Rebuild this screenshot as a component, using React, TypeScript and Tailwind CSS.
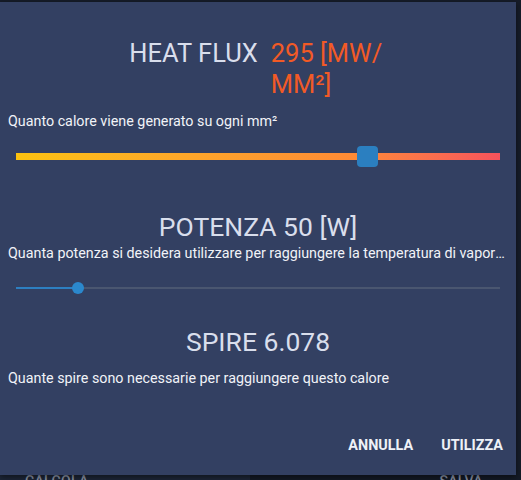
import React from "react";

export default function App() {
  return (
    <div
      className="relative w-[521px] h-[480px] overflow-hidden bg-[#161c29]"
      style={{ fontFamily: "Roboto, 'Noto Sans', sans-serif" }}
    >
      {/* background content */}
      <div className="absolute left-0 bottom-0 w-full h-[10px] flex">
        <div className="w-[250px] h-full bg-[#1d2637] flex items-start pl-[25px] pt-[4px]">
          <span className="text-[14px] font-medium text-[#8a93a6] tracking-wide leading-none">CALCOLA</span>
        </div>
        <div className="flex-1 h-full bg-[#141a26] flex items-start justify-end pr-[38px] pt-[4px]">
          <span className="text-[14px] font-medium text-[#8a93a6] tracking-wide leading-none">SALVA</span>
        </div>
      </div>

      {/* dialog */}
      <div className="absolute left-0 top-[2px] w-[516px] h-[473px] bg-[#334062] shadow-[0_2px_6px_rgba(0,0,0,0.5)] flex flex-col">
        <div className="flex justify-center mt-[36px] text-[25.5px] leading-[31px]">
          <span className="text-[#d9deec]">HEAT FLUX</span>
          <span className="ml-[13px] w-[116px] text-[#f25a26]">295 [MW/ MM²]</span>
        </div>
        <div className="mt-[12px] px-[8px] text-[14.3px] leading-[18px] text-[#f1f3f8]">
          Quanto calore viene generato su ogni mm²
        </div>
        <div className="relative mx-[16px] mt-[16px] h-[21px] flex items-center">
          <div className="w-full h-[7px] bg-gradient-to-r from-[#fcc20f] via-[#fe8a35] via-70% to-[#f7525b]" />
          <div className="absolute left-[341px] top-0 w-[21px] h-[21px] rounded-[4px] bg-[#2b7fc0]" />
        </div>

        <div className="mt-[44px] text-center text-[26.5px] leading-[31px] text-[#d9deec]">
          POTENZA 50 [W]
        </div>
        <div className="mt-[2px] px-[8px] text-[14.3px] leading-[18px] text-[#f1f3f8] whitespace-nowrap overflow-hidden text-ellipsis">
          Quanta potenza si desidera utilizzare per raggiungere la temperatura di vaporizzazione del liquido
        </div>
        <div className="relative mx-[16px] mt-[20px] h-[12px] flex items-center">
          <div className="w-full h-[2px] bg-[#4a5670]" />
          <div className="absolute left-0 top-[5px] w-[62px] h-[2px] bg-[#2d7fc1]" />
          <div className="absolute left-[56px] top-0 w-[12px] h-[12px] rounded-full bg-[#2b88cd]" />
        </div>

        <div className="mt-[32px] text-center text-[26.5px] leading-[31px] text-[#d9deec]">
          SPIRE 6.078
        </div>
        <div className="mt-[12px] px-[8px] text-[14.3px] leading-[18px] text-[#f1f3f8]">
          Quante spire sono necessarie per raggiungere questo calore
        </div>

        <div className="mt-auto mb-[20px] flex justify-end gap-[28px] pr-[13px]">
          <span className="text-[14.4px] font-bold text-[#eef1f7] leading-[18px]">ANNULLA</span>
          <span className="text-[14.4px] font-bold text-[#eef1f7] leading-[18px]">UTILIZZA</span>
        </div>
      </div>
    </div>
  );
}
